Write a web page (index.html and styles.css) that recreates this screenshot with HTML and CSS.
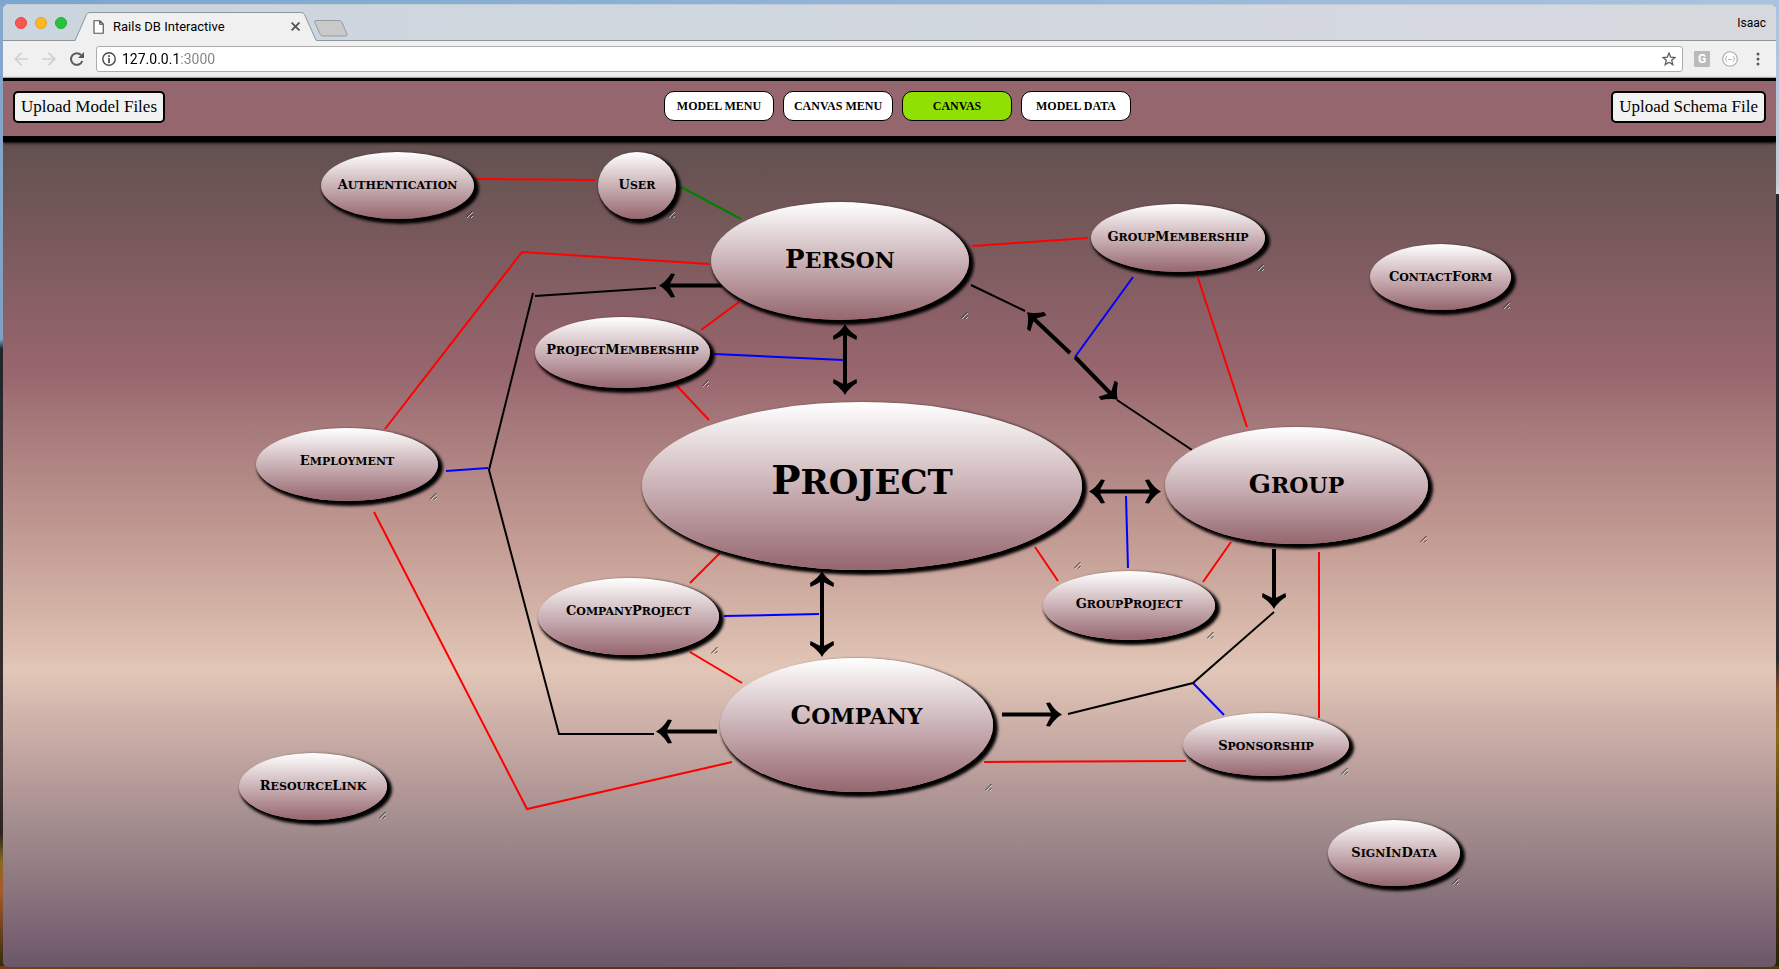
FILE: index.html
```html
<!DOCTYPE html>
<html lang="en">
<head>
<meta charset="utf-8">
<title>Rails DB Interactive</title>
<link rel="stylesheet" href="styles.css">
</head>
<body>
<div class="window">
  <div class="titlebar">
    <button class="light light-close" aria-label="Close window"></button>
    <button class="light light-min" aria-label="Minimise window"></button>
    <button class="light light-max" aria-label="Zoom window"></button>
    <div class="tab">
      <svg class="tab-shape" viewBox="0 0 242 29" aria-hidden="true"><path d="M0 28.5 H0.5 L11.5 2.5 Q12.500 .5 15 .5 H226 Q228.500 .5 229.500 2.500 L240.500 27 Q241 28.500 242 28.500 V29 H0Z" fill="#f0f0f0"/><path d="M0 28.500 L11.500 2.500 Q12.500 .5 15 .5 H226 Q228.500 .5 229.500 2.500 L240.500 27 Q241 28.500 242 28.500" fill="none" stroke="#8f959b"/></svg>
      <svg class="tab-page" viewBox="0 0 12 14" aria-hidden="true"><path d="M1 .75H7L10.250 4V13.250H1Z M6.750 .75V4.250H10.250" fill="#fff" stroke="#555" stroke-width="1.200"/></svg>
      <span class="tab-title">Rails DB Interactive</span>
      <button class="tab-close" aria-label="Close tab"><svg viewBox="0 0 8 8"><path d="M.5 .5L7.500 7.500M7.500 .5L.5 7.500" stroke="#555" stroke-width="1.600"/></svg></button>
    </div>
    <button class="new-tab" aria-label="New tab"><svg viewBox="0 0 34 17"><path d="M2 .5H25Q27 .5 28 2.500L33 14Q33.500 16 31.500 16H9Q7 16 6 14L.8 2.500Q.3 .5 2 .5Z" fill="#c9c9c9" stroke="#969ba0"/></svg></button>
    <span class="profile">Isaac</span>
  </div>
  <div class="toolbar">
    <button class="tool" aria-label="Back"><svg viewBox="0 0 14 14"><path d="M14 7H1.500M7.500 .8L1.300 7L7.500 13.200" fill="none" stroke="#cfcfcf" stroke-width="1.700"/></svg></button>
    <button class="tool" aria-label="Forward"><svg viewBox="0 0 14 14"><path d="M0 7H12.500M6.500 .8L12.700 7L6.500 13.200" fill="none" stroke="#cfcfcf" stroke-width="1.700"/></svg></button>
    <button class="tool" aria-label="Reload"><svg viewBox="0 0 14 14"><path d="M12.300 9A5.800 5.800 0 1 1 11.200 3.200" fill="none" stroke="#5a5a5a" stroke-width="2"/><path d="M14 0V6H8Z" fill="#5a5a5a"/></svg></button>
    <div class="address">
      <svg class="info" viewBox="0 0 14 14" aria-hidden="true"><circle cx="7" cy="7" r="6.200" fill="none" stroke="#4a4a4a" stroke-width="1.400"/><path d="M7 6V11M7 3.200V5" stroke="#4a4a4a" stroke-width="1.700"/></svg>
      <input class="url" type="text" aria-label="Address" value="127.0.0.1:3000">
      <button class="tool" aria-label="Bookmark"><svg viewBox="0 0 14 14"><path d="M7 1.100L8.700 5.200L13 5.500L9.700 8.300L10.800 12.700L7 10.300L3.200 12.700L4.300 8.300L1 5.500L5.300 5.200Z" fill="none" stroke="#5a5a5a" stroke-width="1.300"/></svg></button>
    </div>
    <button class="ext ext-g" aria-label="Extension G">G</button>
    <button class="ext" aria-label="JSON extension"><svg viewBox="0 0 16 16"><circle cx="8" cy="8" r="7.300" fill="#fff" stroke="#aaa" stroke-width="1.100"/><path d="M5.300 5.300Q4.200 5.300 4.200 6.500Q4.200 8 3.200 8Q4.200 8 4.200 9.500Q4.200 10.700 5.300 10.700M10.700 5.300Q11.800 5.300 11.800 6.500Q11.800 8 12.800 8Q11.800 8 11.800 9.500Q11.800 10.700 10.700 10.700M6.200 8.500H9.800" fill="none" stroke="#aaa" stroke-width=".9"/></svg></button>
    <button class="more" aria-label="Menu"><svg viewBox="0 0 4 14"><circle cx="2" cy="2" r="1.500"/><circle cx="2" cy="7" r="1.500"/><circle cx="2" cy="12" r="1.500"/></svg></button>
  </div>

  <header class="header">
    <button class="upload">Upload Model Files</button>
    <nav class="menu">
      <button class="menu-item">MODEL MENU</button>
      <button class="menu-item">CANVAS MENU</button>
      <button class="menu-item active">CANVAS</button>
      <button class="menu-item">MODEL DATA</button>
    </nav>
    <button class="upload upload-schema">Upload Schema File</button>
  </header>

  <main class="canvas">
    <svg class="links" aria-hidden="true">
      <defs>
        <path id="head" d="M0 0C-4 -2 -9 -7 -12 -12L-16 -11.500C-14 -7 -12 -4 -11 -1.500V1.500C-12 4 -14 7 -16 11.500L-12 12C-9 7 -4 2 0 0Z"/>
      </defs>
      <g transform="translate(-3 -142)">
        <g class="line red">
          <path d="M476 179L595 180"/>
          <path d="M709 264L522 252L385 429"/>
          <path d="M972 246L1088 238"/>
          <path d="M739 302L701 330"/>
          <path d="M677 386L709 420"/>
          <path d="M1198 278L1247 427"/>
          <path d="M374 512L527 809L732 762"/>
          <path d="M690 583L720 553"/>
          <path d="M690 652L742 683"/>
          <path d="M1035 547L1058 581"/>
          <path d="M1231 542L1203 582"/>
          <path d="M1319 552V718"/>
          <path d="M984 762L1186 761"/>
        </g>
        <g class="line green"><path d="M681 187L741 219"/></g>
        <g class="line blue">
          <path d="M714 354L843 360"/>
          <path d="M1133 277L1075 357"/>
          <path d="M446 471L488 468"/>
          <path d="M724 616L819 614"/>
          <path d="M1126 496L1128 568"/>
          <path d="M1193 683L1224 715"/>
        </g>
        <g class="line black">
          <path d="M656 288L535 296"/>
          <path d="M533 293L489 470L559 734H654"/>
          <path d="M971 285L1025 311"/>
          <path d="M1117 400L1192 450"/>
          <path d="M1274 612L1193 683L1068 714"/>
        </g>
        <g class="shaft">
          <path d="M668 285.500H722"/>
          <path d="M666 731.500H717"/>
          <path d="M845 333V386"/>
          <path d="M822 580V648"/>
          <path d="M1033 318L1070 353"/>
          <path d="M1075 357L1110 393"/>
          <path d="M1098 491.500H1152"/>
          <path d="M1274 549V600"/>
          <path d="M1002 714.500H1053"/>
        </g>
        <use href="#head" transform="translate(659 285.500) rotate(180)"/>
        <use href="#head" transform="translate(656 731.500) rotate(180)"/>
        <use href="#head" transform="translate(845 324) rotate(-90)"/>
        <use href="#head" transform="translate(845 395) rotate(90)"/>
        <use href="#head" transform="translate(822 571) rotate(-90)"/>
        <use href="#head" transform="translate(822 657) rotate(90)"/>
        <use href="#head" transform="translate(1027 312) rotate(-135)"/>
        <use href="#head" transform="translate(1118 400) rotate(45)"/>
        <use href="#head" transform="translate(1089 491.500) rotate(180)"/>
        <use href="#head" transform="translate(1161 491.500)"/>
        <use href="#head" transform="translate(1274 609) rotate(90)"/>
        <use href="#head" transform="translate(1062 714.500)"/>
      </g>
    </svg>

    <div class="node authentication"><p class="name">A<span>uthentication</span></p></div>
    <div class="node user"><p class="name">U<span>ser</span></p></div>
    <div class="node medium person"><p class="name">P<span>erson</span></p></div>
    <div class="node group-membership"><p class="name">G<span>roup</span>M<span>embership</span></p></div>
    <div class="node contact-form"><p class="name">C<span>ontact</span>F<span>orm</span></p></div>
    <div class="node project-membership"><p class="name">P<span>roject</span>M<span>embership</span></p></div>
    <div class="node employment"><p class="name">E<span>mployment</span></p></div>
    <div class="node large project"><p class="name">P<span>roject</span></p></div>
    <div class="node medium group"><p class="name">G<span>roup</span></p></div>
    <div class="node group-project"><p class="name">G<span>roup</span>P<span>roject</span></p></div>
    <div class="node company-project"><p class="name">C<span>ompany</span>P<span>roject</span></p></div>
    <div class="node medium company"><p class="name">C<span>ompany</span></p></div>
    <div class="node sponsorship"><p class="name">S<span>ponsorship</span></p></div>
    <div class="node resource-link"><p class="name">R<span>esource</span>L<span>ink</span></p></div>
    <div class="node sign-in-data"><p class="name">S<span>ign</span>I<span>n</span>D<span>ata</span></p></div>
  </main>
</div>
</body>
</html>
```

FILE: styles.css
```css
* { box-sizing: border-box; }

body {
  margin: 0;
  min-height: 100vh;
  padding: 4px 3px 2px;
  display: flex;
  background:
    linear-gradient(90deg, #7ba6cf, #a9c3e0) top / 100% 5px no-repeat,
    linear-gradient(90deg, #7a3c18, #5e2f18 40%, #8a4a18 70%, #4a3a10) bottom / 100% 3px no-repeat,
    linear-gradient(#86a9cb, #7fa0c2 35%, #23252b 36%, #3a3030 80%, #2a2320 86%, #8a6a20 89%, #a8592c 92%, #302a10) left / 4px 100% no-repeat,
    linear-gradient(#a9c3e0, #c3cbd4 19%, #d8d8d4 20%, #26262a 20%, #2c2a2c 68%, #7a4a28 71%, #8a6a18 76%, #5a4210 84%, #2a2008) right / 4px 100% no-repeat,
    #333;
}

button {
  margin: 0;
  padding: 0;
  border: 0;
  background: none;
  color: #000;
}

svg { display: block; }

.window {
  flex: 1;
  min-width: 0;
  display: flex;
  flex-direction: column;
  border-radius: 5px;
  overflow: hidden;
  font-family: Roboto, "Liberation Sans", sans-serif;
}

/* Browser chrome */
.titlebar {
  height: 37px;
  display: flex;
  align-items: center;
  gap: 8px;
  padding: 0 10px 0 12px;
  border-top: 1px solid #c3ccd4;
  border-bottom: 1px solid #8f959b;
  background: linear-gradient(90deg, #cbd5de, #d5d8df 80%, #d5d8dd);
}

.light {
  width: 12px;
  height: 12px;
  border-radius: 50%;
}

.light-close { background: #fc5650; border: 1px solid #e2443e; }
.light-min { background: #fdb827; border: 1px solid #e0a01f; }
.light-max { background: #26c33c; border: 1px solid #1fab2f; }

.tab {
  position: relative;
  align-self: flex-end;
  flex: none;
  width: 242px;
  height: 29px;
  margin-bottom: -1px;
  padding: 0 17px 0 18px;
  display: flex;
  align-items: center;
  gap: 8px;
}

.tab-shape {
  position: absolute;
  inset: 0;
  width: 100%;
  height: 100%;
}

.tab-page { position: relative; width: 12px; height: 14px; }

.tab-title {
  position: relative;
  flex: 1;
  font-size: 13px;
  line-height: 16px;
  white-space: nowrap;
}

.tab-close { position: relative; width: 9px; height: 9px; }

.new-tab {
  align-self: flex-end;
  width: 34px;
  height: 17px;
  margin: 0 auto 3px -11px;
}

.profile { font-size: 12px; line-height: 16px; }

.toolbar {
  height: 37px;
  display: flex;
  align-items: center;
  gap: 12px;
  padding: 0 16px 0 11px;
  border-bottom: 1px solid #c8c8c8;
  background: #f0f0f0;
}

.tool { flex: none; width: 14px; height: 14px; }
.tool + .tool { margin-left: 2px; }

.address {
  flex: 1;
  height: 26px;
  display: flex;
  align-items: center;
  gap: 6px;
  padding: 0 6px 0 5px;
  border: 1px solid #acacac;
  border-radius: 3px;
  background: #fff;
}

.info { width: 14px; height: 14px; }

.url {
  flex: 1;
  padding: 0;
  border: 0;
  outline: 0;
  font: 14px/20px Roboto, "Liberation Sans", sans-serif;
  color: transparent;
  background: linear-gradient(90deg, #000 56px, #808080 56px);
  background-clip: text;
  -webkit-background-clip: text;
}

.ext { width: 16px; height: 16px; }

.ext-g {
  margin-left: -1px;
  border-radius: 1px;
  background: #bababa;
  color: #fff;
  font: bold 12px/16px Roboto, sans-serif;
}

.more { width: 4px; height: 14px; margin-left: 6px; fill: #5a5a5a; }

/* Application header */
.header {
  position: relative;
  z-index: 1;
  display: grid;
  grid-template-columns: 1fr auto 1fr;
  align-items: start;
  height: 64px;
  padding: 10px;
  border-top: 3px solid #000;
  border-bottom: 6px solid #000;
  background: #96666e;
  box-shadow: 0 1px 3px #000;
}

.upload {
  justify-self: start;
  height: 32px;
  padding: 0 6px;
  border: 2px solid #000;
  border-radius: 5px;
  background: #f2f2f2;
  font: 17px/24px "Liberation Serif", serif;
}

.upload-schema { justify-self: end; }

.menu { display: flex; gap: 9px; padding-left: 16px; }

.menu-item {
  width: 110px;
  height: 30px;
  border: 1px solid #000;
  border-radius: 10px;
  background: #fff;
  font: bold 12px/16px "Liberation Serif", serif;
}

.menu-item.active { background: #90e004; }

/* Canvas */
.canvas {
  position: relative;
  flex: 1;
  min-height: 780px;
  background: linear-gradient(#62504f, #98666e 28%, #a5787a 34%, #c29b93 48%, #e2c6b7 64%, #b29696 79%, #a89291 81%, #87717a 92%, #765f71 97%, #6a5768);
}

.links {
  position: absolute;
  inset: 0;
  width: 100%;
  height: 100%;
}

.line { fill: none; stroke-width: 2; }
.red { stroke: #f00; }
.green { stroke: #008000; }
.blue { stroke: #00f; }
.black { stroke: #000; }
.shaft { stroke: #000; stroke-width: 4; }

.node {
  position: absolute;
  padding-top: 24px;
  border-radius: 50%;
  background: linear-gradient(#fff, #96666e);
  box-shadow: 3px 3px 3px 2px #000;
}

/* Resize grip in the corner of each node */
.node::after {
  content: "";
  position: absolute;
  right: 1px;
  bottom: 1px;
  width: 7px;
  height: 7px;
  background: url("data:image/svg+xml,%3Csvg xmlns='http://www.w3.org/2000/svg' viewBox='0 0 7 7'%3E%3Cpath d='M0 6.5L6.500 0M4 6.500L6.500 4' stroke='%23333'/%3E%3Cpath d='M1 7L7 1M5 7L7 5' stroke='%23ddd' stroke-width='.8'/%3E%3C/svg%3E");
}

.name {
  margin: 0;
  font: bold 13px/18px "DejaVu Serif", serif;
  text-align: center;
  white-space: nowrap;
  text-transform: uppercase;
}

.name span { font-size: 11px; }

.medium { padding-top: 42px; }
.medium .name { font-size: 26px; line-height: 30px; }
.medium span { font-size: 22px; }
.large { padding-top: 58px; }
.large .name { font-size: 39px; line-height: 40px; }
.large span { font-size: 34px; }

.authentication { left: 318px; top: 10px; width: 153px; height: 67px; }
.user { left: 595px; top: 10px; width: 78px; height: 67px; }
.person { left: 708px; top: 60px; width: 258px; height: 118px; }
.group-membership { left: 1088px; top: 62px; width: 174px; height: 68px; }
.contact-form { left: 1367px; top: 102px; width: 141px; height: 66px; }
.project-membership { left: 532px; top: 175px; width: 175px; height: 71px; }
.employment { left: 253px; top: 286px; width: 182px; height: 73px; }
.project { left: 639px; top: 260px; width: 440px; height: 168px; }
.group { left: 1162px; top: 285px; width: 263px; height: 117px; }
.group-project { left: 1040px; top: 429px; width: 172px; height: 69px; }
.company-project { left: 535px; top: 436px; width: 181px; height: 77px; }
.company { left: 717px; top: 516px; width: 273px; height: 134px; }
.sponsorship { left: 1180px; top: 571px; width: 166px; height: 63px; }
.resource-link { left: 236px; top: 611px; width: 148px; height: 67px; }
.sign-in-data { left: 1325px; top: 678px; width: 132px; height: 66px; }
```
